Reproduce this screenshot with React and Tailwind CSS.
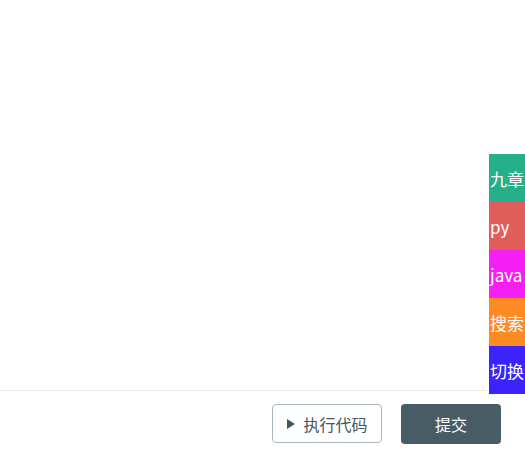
import React from "react";

// 右側の切り替えタブ
const tabs = [
  { label: "九章", color: "bg-[#26b08a]" },
  { label: "py", color: "bg-[#e05d5a]" },
  { label: "java", color: "bg-[#f51ff5]" },
  { label: "搜索", color: "bg-[#fd8a24]" },
  { label: "切换", color: "bg-[#3c22fb]" },
];

export default function App() {
  return (
    <div
      className="relative flex h-[454px] w-[525px] flex-col overflow-hidden bg-white"
      style={{ fontFamily: '"Microsoft YaHei", "Noto Sans CJK SC", "Noto Sans", sans-serif' }}
    >
      {/* エディタ領域 */}
      <div className="h-[391px] border-b border-[#ebebeb]" />

      {/* フッター */}
      <div className="flex flex-1 items-start justify-end gap-[19px] pt-[13px] pr-[24px]">
        <button className="flex h-[39px] w-[110px] items-center justify-center gap-[7px] rounded border border-[#a9b7c0] bg-white text-[16px] text-[#44555f]">
          <svg width="10" height="12" viewBox="0 0 10 12">
            <path d="M1 1 L9 6 L1 11 Z" fill="#44555f" />
          </svg>
          执行代码
        </button>
        <button className="flex h-[40px] w-[100px] items-center justify-center rounded bg-[#485c66] text-[16px] text-white">
          提交
        </button>
      </div>

      {/* サイドタブ */}
      <div className="absolute right-0 top-[154px] flex w-[36px] flex-col">
        {tabs.map((t) => (
          <div
            key={t.label}
            className={`flex h-[48px] items-center overflow-hidden whitespace-nowrap pl-[1px] text-[17px] leading-none text-white ${t.color}`}
          >
            {t.label}
          </div>
        ))}
      </div>
    </div>
  );
}
